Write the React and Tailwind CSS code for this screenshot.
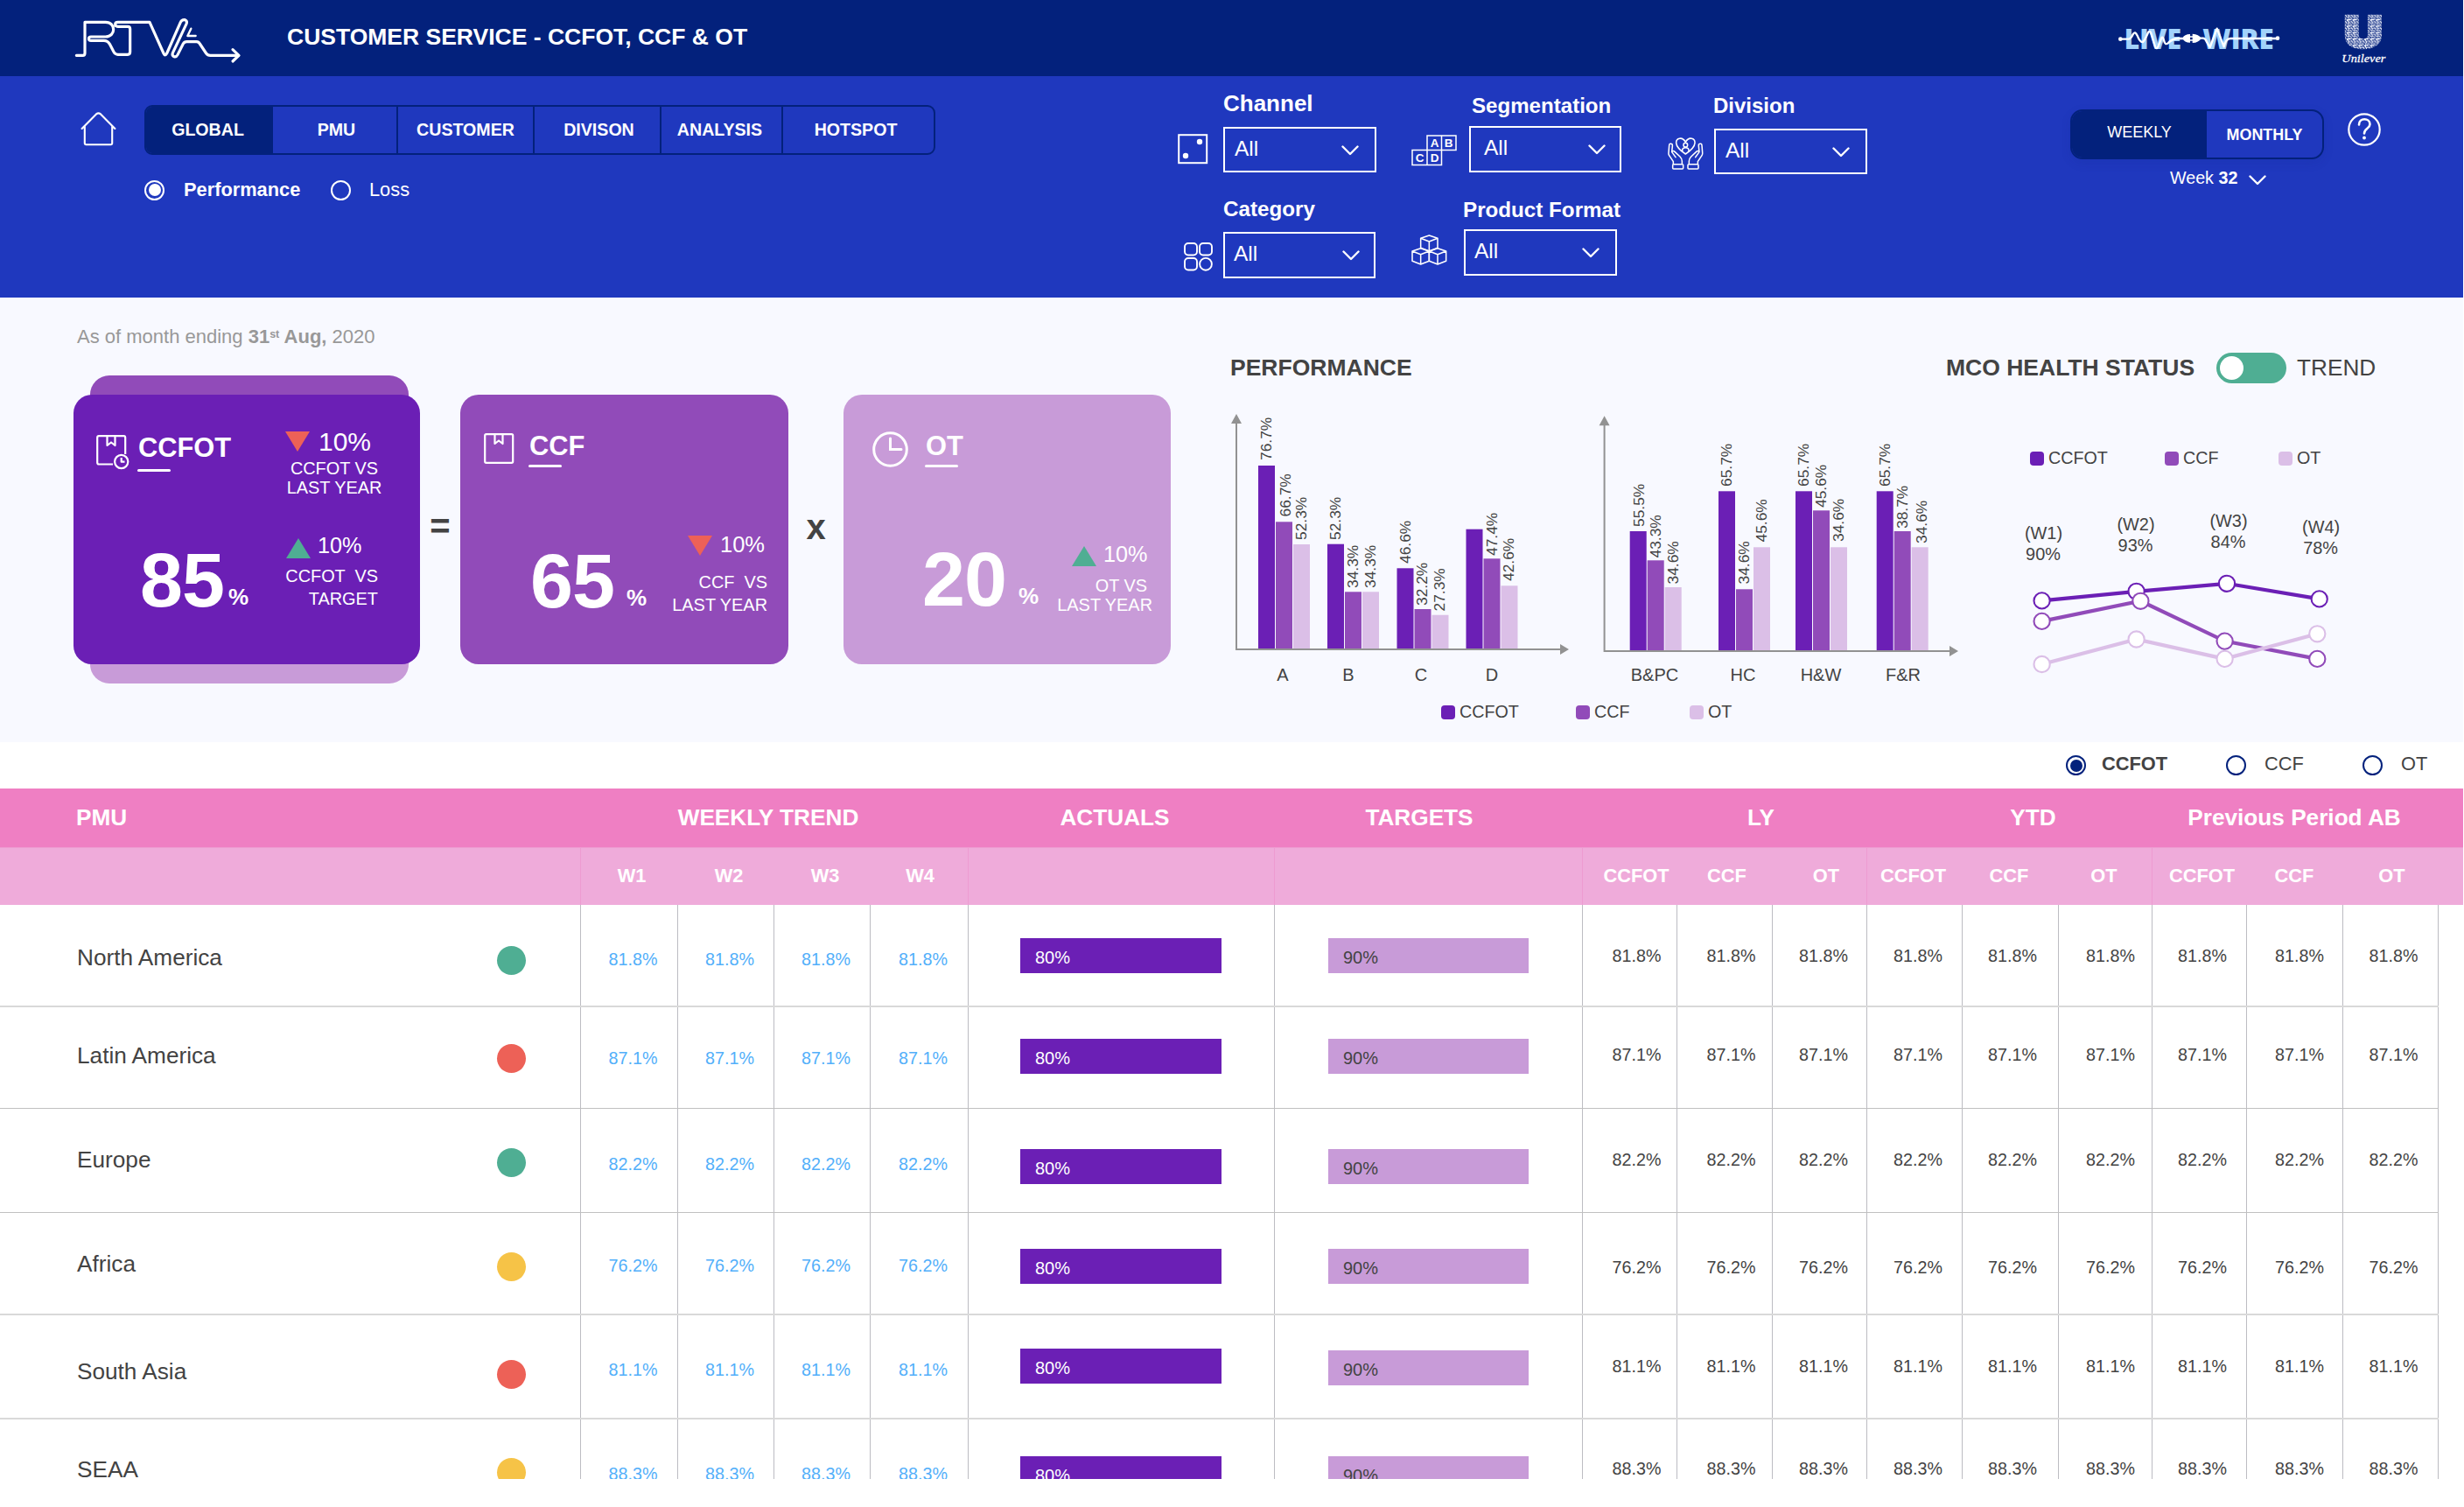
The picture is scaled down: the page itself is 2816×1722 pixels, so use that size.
import React, { useState } from 'react';
import clsx from 'clsx';

const SERIES = [
    { name: 'CCFOT', color: '#6b1fb5', bg: 'bg-[#6b1fb5]' },
    { name: 'CCF', color: '#914bb9', bg: 'bg-[#914bb9]' },
    { name: 'OT', color: '#dbbfe7', bg: 'bg-[#dbbfe7]' }
];

const TABS = [
    { name: 'GLOBAL', className: 'w-[145px]' },
    { name: 'PMU', className: 'w-[143px] pl-1' },
    { name: 'CUSTOMER', className: 'w-[156px]' },
    { name: 'DIVISON', className: 'w-[145px] pl-1' },
    { name: 'ANALYSIS', className: 'w-[139px] pr-1' },
    { name: 'HOTSPOT', className: 'w-[176px] pr-2' }
];

// Each bar: [top of bar, label, label baseline x, label start y]
const GROUP_CHART = {
    axis: { x: 1413, top: 473, bottom: 742, right: 1793 },
    groups: [
        { name: 'A', x: 1438, labelX: 1466, bars: [[532, '76.7%', 1453, 526], [596.3, '66.7%', 1474.5, 590.5], [622, '52.3%', 1492.5, 617]] },
        { name: 'B', x: 1517, labelX: 1541, bars: [[621.7, '52.3%', 1532, 617], [676.3, '34.3%', 1552, 672], [676.3, '34.3%', 1572, 672]] },
        { name: 'C', x: 1596.5, labelX: 1624, bars: [[649.3, '46.6%', 1611.5, 644], [696, '32.2%', 1631, 692], [702.7, '27.3%', 1651, 698.5]] },
        { name: 'D', x: 1675.5, labelX: 1705, bars: [[604.7, '', 0, 0], [638.3, '47.4%', 1710.5, 635], [669.3, '42.6%', 1730, 664]] }
    ]
};

const DIVISION_CHART = {
    axis: { x: 1833.6, top: 475.3, bottom: 744, right: 2238 },
    groups: [
        { name: 'B&PC', x: 1862.7, labelX: 1891, bars: [[607, '55.5%', 1878.5, 602], [640.3, '43.3%', 1898, 637.5], [671, '34.6%', 1917.5, 667.5]] },
        { name: 'HC', x: 1964, labelX: 1992, bars: [[561.3, '65.7%', 1979, 556], [673.3, '34.6%', 1999, 667.5], [625.3, '45.6%', 2019, 619.5]] },
        { name: 'H&W', x: 2052, labelX: 2081, bars: [[561.3, '65.7%', 2067, 556], [583.3, '45.6%', 2087, 580], [625.3, '34.6%', 2107, 619]] },
        { name: 'F&R', x: 2144.7, labelX: 2175, bars: [[561.3, '65.7%', 2159.5, 556], [607, '38.7%', 2179.5, 604], [625.3, '34.6%', 2201.5, 621]] }
    ]
};

const TREND_POINTS = [
    [[2333.6, 685.4], [2441.6, 674.8], [2545, 665.8], [2650.7, 683.4]],
    [[2333.6, 708.9], [2446.4, 685.8], [2542.6, 731.6], [2648.3, 751.9]],
    [[2333.6, 758], [2441.6, 729.5], [2542.6, 751.9], [2648.3, 723.3]]
];

const TREND_LABELS = [
    { week: '(W1)', value: '90%', x: 2335.5, y: 614.5 },
    { week: '(W2)', value: '93%', x: 2441, y: 605.2 },
    { week: '(W3)', value: '84%', x: 2547, y: 600.5 },
    { week: '(W4)', value: '78%', x: 2652.6, y: 607.5 }
];

const GRID = 'grid grid-cols-[663px_111px_110px_110px_112px_350px_352px_108px_109px_108px_109px_110px_107px_108px_110px_110px]';

const WEEK_HEADS = [['W1', 'pl-[6px]'], ['W2', 'pl-[8px]'], ['W3', 'pl-[8px]'], ['W4', 'pl-[3px]']];
const METRIC_HEADS = [
    ['CCFOT', 'pl-[15px] border-l'], ['CCF', 'pl-[6px]'], ['OT', 'pl-[16px]'],
    ['CCFOT', 'pr-[3px] border-l'], ['CCF', 'pr-[2px]'], ['OT', 'pr-[2px]'],
    ['CCFOT', 'pl-[6px] border-l'], ['CCF', 'pl-0'], ['OT', 'pl-[3px]']
];
const METRIC_PADS = ['pl-[16px]', 'pl-[15px]', 'pl-[9px]', 'pl-[8px]', 'pl-[5px]', 'pl-[12px]', 'pl-[7px]', 'pl-[11px]', 'pl-[7px]'];

const ROWS = [
    { name: 'North America', dot: 'bg-[#4fae93]', value: '81.8%', row: 'h-[117px] border-b-2 border-[#d9d9d9]', nameY: 'pt-[48px]', dotY: 'mt-[47px]', weekY: 'pt-[50px]', actualY: 'mt-[38px]', targetY: 'mt-[38px]', metricY: 'pt-[46px]' },
    { name: 'Latin America', dot: 'bg-[#ed6157]', value: '87.1%', row: 'h-[116px] border-b border-[#c0c0c0]', nameY: 'pt-[43px]', dotY: 'mt-[42px]', weekY: 'pt-[46px]', actualY: 'mt-[36px]', targetY: 'mt-[36px]', metricY: 'pt-[42px]' },
    { name: 'Europe', dot: 'bg-[#4fae93]', value: '82.2%', row: 'h-[119px] border-b border-[#c0c0c0]', nameY: 'pt-[46px]', dotY: 'mt-[45px]', weekY: 'pt-[51px]', actualY: 'mt-[46px]', targetY: 'mt-[46px]', metricY: 'pt-[46px]' },
    { name: 'Africa', dot: 'bg-[#f6c347]', value: '76.2%', row: 'h-[117px] border-b-2 border-[#d9d9d9]', nameY: 'pt-[46px]', dotY: 'mt-[45px]', weekY: 'pt-[48px]', actualY: 'mt-[41px]', targetY: 'mt-[41px]', metricY: 'pt-[50px]' },
    { name: 'South Asia', dot: 'bg-[#ed6157]', value: '81.1%', row: 'h-[119px] border-b-2 border-[#d9d9d9]', nameY: 'pt-[52px]', dotY: 'mt-[51px]', weekY: 'pt-[50px]', actualY: 'mt-[38px]', targetY: 'mt-[40px]', metricY: 'pt-[46px]' },
    { name: 'SEAA', dot: 'bg-[#f6c347]', value: '88.3%', row: 'h-[68px]', nameY: 'pt-[45px]', dotY: 'mt-[44px]', weekY: 'pt-[50px]', actualY: 'mt-[42px]', targetY: 'mt-[42px]', metricY: 'pt-[44px]' }
];

const RtvaLogo = () => (
    <svg className="ml-20 h-[87px] w-[200px]" viewBox="0 0 600 261" fill="none" stroke="#fff" strokeWidth="9.5" strokeLinecap="round" strokeLinejoin="round">
        <path d="M22 190H44Q51 190 51 182V76H122C158 76 158 126 122 126H72C62 126 62 139 72 139H116Q129 139 136 151L150 178Q155 187 164 187H198Q206 187 206 178V99Q206 91 198 91H164C152 91 152 76 164 76H273L321 183Q326 194 332 183L379 76Q384 66 394 68Q403 72 399 82L352 182Q349 191 357 194Q365 196 369 188L388 150Q392 143 400 143H434Q441 143 445 150L467 183Q472 190 481 190H578" />
        <path d="M558 170L579 190L558 210" />
        <path d="M415 98L403 123H431" strokeWidth="7" />
    </svg>
);

const LiveWireLogo = () => (
    <svg className="mt-[30px] h-[29px] w-[189px] overflow-visible" viewBox="270 90 567 87" fill="none">
        <g fill="#a2d2fb" fontFamily="Open Sans" fontWeight="800" fontSize="95">
            <text x="296" y="167" textLength="196" lengthAdjust="spacingAndGlyphs">LIVE</text>
            <text x="565" y="167" textLength="244" lengthAdjust="spacingAndGlyphs">WIRE</text>
        </g>
        <g stroke="#fff" strokeWidth="7" strokeLinecap="round" strokeLinejoin="round">
            <path d="M283 134H312Q320 132 326 118Q333 105 341 122Q350 146 360 144Q366 140 378 112Q384 100 390 120L402 160Q407 172 413 158L424 130Q429 124 432 138Q436 156 446 148Q460 133 480 132H500" />
            <path d="M556 131H566Q574 131 578 142L590 162L614 98L638 160Q644 132 660 132H820" />
            <path d="M518 126H534M518 138H534" strokeWidth="4" />
        </g>
        <g fill="#fff">
            <circle cx="283" cy="134" r="7" />
            <circle cx="822" cy="131" r="7" />
            <path d="M496 131Q502 117 522 117V146Q502 146 496 131ZM530 116Q552 117 560 131Q552 146 530 147Z" />
        </g>
    </svg>
);

const UnileverLogo = () => (
    <svg className="mt-3 ml-[67px] h-[64px] w-[54px] overflow-visible" viewBox="1033 36 162 192">
        <defs>
            <pattern id="mosaic" width="20" height="22" patternUnits="userSpaceOnUse">
                <rect width="20" height="22" fill="#eef1fb" />
                <path d="M0 4Q5 9 9 3M12 0Q10 7 17 8M3 13Q8 9 11 15T18 16M0 20Q5 15 9 21M14 11L20 12M13 20L18 22" stroke="#03217c" strokeWidth="3.2" fill="none" />
            </pattern>
        </defs>
        <text x="1049" y="159" fontFamily="Liberation Sans" fontWeight="700" fontSize="146" textLength="124" lengthAdjust="spacingAndGlyphs" fill="url(#mosaic)" stroke="url(#mosaic)" strokeWidth="20">U</text>
        <text x="1037" y="214" fontFamily="Liberation Serif" fontStyle="italic" fontSize="40" textLength="150" lengthAdjust="spacingAndGlyphs" fill="#fff" stroke="#fff" strokeWidth="0.8">Unilever</text>
    </svg>
);

const Chevron = ({ className }) => (
    <svg className={clsx('h-[12px] w-[20px]', className)} viewBox="0 0 20 12" fill="none" stroke="#fff" strokeWidth="2.4" strokeLinecap="round" strokeLinejoin="round">
        <path d="M1.5 1.5L10 10L18.5 1.5" />
    </svg>
);

const DiceIcon = () => (
    <svg className="mt-[50px] h-[35px] w-[35px]" viewBox="0 0 35 35" fill="none">
        <rect x="1.2" y="1.2" width="32" height="32" stroke="#fff" strokeWidth="2" />
        <circle cx="25" cy="9" r="3.2" fill="#fff" />
        <circle cx="9" cy="25" r="3.2" fill="#fff" />
    </svg>
);

const BlocksIcon = () => (
    <svg className="mt-[48px] h-[36px] w-[53px]" viewBox="0 0 53 36" fill="none" stroke="#fff" strokeWidth="1.5">
        <path d="M18 1H51V17.5H18ZM34.5 1V17.5M1 17.5H34.5V34.5H1ZM18 17.5V34.5" />
        <g fill="#fff" stroke="none" fontFamily="Liberation Sans" fontWeight="700" fontSize="13.5" textAnchor="middle">
            <text x="26.5" y="14">A</text>
            <text x="42.5" y="14">B</text>
            <text x="9.5" y="31">C</text>
            <text x="26.5" y="31">D</text>
        </g>
    </svg>
);

const HandsIcon = () => (
    <svg className="mt-[51px] h-[38px] w-[41px]" viewBox="0 0 123 114" fill="none" stroke="#fff" strokeWidth="4.6" strokeLinecap="round" strokeLinejoin="round">
        <path d="M61 16C50 -4 28 2 29 19C30 34 46 47 61 57C76 47 92 34 93 19C94 2 72 -4 61 16Z" />
        <circle cx="61" cy="26" r="7" />
        <path d="M50 48V44Q50 35 61 35Q72 35 72 44V48" />
        <path d="M19 91V83L5 62Q2 58 3 52L5 27Q6 20 12 22Q17 23 16 30L14 50L27 68M14 50Q18 44 24 49L42 66Q49 73 49 82V91" />
        <path d="M103 91V83L117 62Q120 58 119 52L117 27Q116 20 110 22Q105 23 106 30L108 50L95 68M108 50Q104 44 98 49L80 66Q73 73 73 82V91" />
        <rect x="17" y="92" width="36" height="16" rx="3" />
        <rect x="69" y="92" width="36" height="16" rx="3" />
    </svg>
);

const CategoryIcon = () => (
    <svg className="mt-[53px] ml-[7px] h-[33px] w-[34px]" viewBox="0 0 34 33" fill="none" stroke="#fff" strokeWidth="1.9">
        <rect x="1" y="1" width="14" height="13.5" rx="4" />
        <rect x="18" y="1" width="14" height="13.5" rx="4" />
        <rect x="1" y="18" width="14" height="13.5" rx="4" />
        <circle cx="25" cy="24.8" r="6.9" />
    </svg>
);

const CubesIcon = () => (
    <svg className="mt-[43px] h-[36px] w-[41px]" viewBox="0 0 123 108" fill="none" stroke="#fff" strokeWidth="4.6" strokeLinejoin="round">
        <path d="M61 3L90 13V46L61 57L32 46V13ZM32 13L61 24L90 13M61 24V57" />
        <path d="M32 47L61 57V91L32 102L3 91V57ZM3 57L32 68L61 57M32 68V102" />
        <path d="M90 47L119 57V91L90 102L61 91V57ZM61 57L90 68L119 57M90 68V102" />
    </svg>
);

const Radio = ({ checked, dark, className }) => (
    <span className={clsx('flex size-[23px] items-center justify-center rounded-full border-2', dark ? 'border-[#03217c]' : 'border-white', className)}>
        {checked && <span className={clsx('size-[14px] rounded-full', dark ? 'bg-[#03217c]' : 'bg-white')}></span>}
    </span>
);

const Filter = ({ label, icon, slot, className, labelClass, boxClass }) => (
    <div className={clsx('flex', className)}>
        <div className={clsx('shrink-0', slot)}>{icon}</div>
        <div>
            <div className={clsx('h-[30px] font-bold leading-[30px] whitespace-nowrap', labelClass)}>{label}</div>
            <button className={clsx('flex items-center justify-between border-2 border-white pb-[2px] text-[24.5px]', boxClass)}>
                All
                <Chevron className="mt-[3px]" />
            </button>
        </div>
    </div>
);

const Triangle = ({ up, className }) => (
    <svg className={clsx('h-[23px] w-[28px]', className)} viewBox="0 0 28 23">
        {up ? <path d="M14 0L28 23H0Z" fill="#4fae93" /> : <path d="M0 0H28L14 23Z" fill="#ed6157" />}
    </svg>
);

const PackageIcon = ({ clock, className }) => (
    <svg className={clsx('h-[40px]', className, clock ? 'w-[38px]' : 'w-[35px]')} viewBox={clock ? '0 0 38 40' : '0 0 35 40'} fill="none" stroke="#fff" strokeWidth="2.2" strokeLinejoin="round">
        {clock
            ? <path d="M19 33.5H3Q1.2 33.5 1.2 31.5V3Q1.2 1.2 3 1.2H31.5Q33.2 1.2 33.2 3V22" />
            : <rect x="1.2" y="1.2" width="32" height="32.6" rx="1.5" />}
        <path d="M12.5 1.2V12L17 8.5L21.5 12V1.2" />
        {clock && <circle cx="28.7" cy="30.5" r="7.6" />}
        {clock && <path d="M28.7 26V30.7H32.5" />}
    </svg>
);

const CardTitle = ({ title, lineClass }) => (
    <div>
        <div className="h-[32px] pl-px text-[30.8px] font-bold leading-[33px]">{title}</div>
        <div className={clsx('h-[3px] rounded-full bg-white', lineClass)}></div>
    </div>
);

const BigNumber = ({ value, className, percentClass }) => (
    <div className={clsx('flex items-end font-bold', className)}>
        <span className="text-[88px] leading-[90px] tracking-[-1px]">{value}</span>
        <span className={clsx('pb-[12px] text-[26px] leading-[28px]', percentClass)}>%</span>
    </div>
);

const Legend = ({ className, widths }) => (
    <div className={clsx('flex h-6 items-center text-[19.7px]', className)}>
        {SERIES.map((s, i) => (
            <div key={s.name} className={clsx('flex items-center gap-[5px]', widths[i])}>
                <span className={clsx('size-[16px] rounded-[4px]', s.bg)}></span>
                {s.name}
            </div>
        ))}
    </div>
);

const BarGroups = ({ axis, groups }) => (
    <g>
        {groups.map((group) => (
            <g key={group.name}>
                {group.bars.map(([top, label, lx, ly], i) => (
                    <g key={i}>
                        <rect x={group.x + i * 20} y={top} width="19" height={axis.bottom - top} fill={SERIES[i].color} />
                        {label && <text transform={`translate(${lx} ${ly}) rotate(-90)`} fontSize="17.4">{label}</text>}
                    </g>
                ))}
                <text x={group.labelX} y="777.5" fontSize="20" textAnchor="middle">{group.name}</text>
            </g>
        ))}
        <path d={`M${axis.x} ${axis.top + 5}V${axis.bottom}H${axis.right - 5}`} fill="none" stroke="#929292" strokeWidth="2" />
        <path d={`M${axis.x} ${axis.top}l6 11h-12zM${axis.right} ${axis.bottom}l-10 -6v12z`} fill="#929292" />
    </g>
);

const TrendChart = () => (
    <svg className="mt-[45px] ml-[76px] h-[200px] w-[400px]" viewBox="2300 580 400 200">
        {TREND_POINTS.map((points, i) => (
            <g key={i} fill="none" stroke={SERIES[i].color}>
                <polyline points={points.map((p) => p.join(',')).join(' ')} strokeWidth="4.2" />
                {points.map(([x, y]) => (
                    <circle key={x} cx={x} cy={y} r="9.1" fill="#fff" strokeWidth="2.1" />
                ))}
            </g>
        ))}
        <g fill="#434343" fontSize="19.9" textAnchor="middle">
            {TREND_LABELS.map((l) => (
                <g key={l.week}>
                    <text x={l.x} y={l.y}>{l.week}</text>
                    <text x={l.x - 0.5} y={l.y + 24}>{l.value}</text>
                </g>
            ))}
        </g>
    </svg>
);

const Header = () => (
    <header className="flex h-[87px] bg-[#03217c]">
        <RtvaLogo />
        <h1 className="ml-[48px] text-[26.5px] font-bold leading-[84px]">CUSTOMER SERVICE - CCFOT, CCF &amp; OT</h1>
        <div className="ml-auto flex pr-[86px]">
            <LiveWireLogo />
            <UnileverLogo />
        </div>
    </header>
);

const Toolbar = () => {
    const [tab, setTab] = useState('GLOBAL');
    return (
        <section className="flex h-[253px] bg-[#1f38be]">
            <div className="w-[1069px] shrink-0 pt-[33px] pl-[92px]">
                <div className="flex">
                    <svg className="mt-[8px] h-[40px] w-[41px] shrink-0" viewBox="0 0 41 40" fill="none" stroke="#fff" strokeWidth="2.1" strokeLinecap="round" strokeLinejoin="round">
                        <path d="M1.6 19L18.2 2.2Q20.5 .4 22.8 2.2L39.4 19M4.8 16V35.5Q4.8 37.2 6.5 37.2H34.5Q36.2 37.2 36.2 35.5V16" />
                    </svg>
                    <nav className="ml-[32px] flex h-[57px] w-[904px] overflow-hidden rounded-[9px] border-2 border-[#03217c]">
                        {TABS.map((t, i) => (
                            <button
                                key={t.name}
                                onClick={() => setTab(t.name)}
                                className={clsx(
                                    'shrink-0 text-[19.6px] font-bold',
                                    i === 0 ? '-ml-[2px]' : 'border-l-2 border-[#03217c]',
                                    tab === t.name && 'bg-[#03217c]',
                                    t.className
                                )}
                            >
                                {t.name}
                            </button>
                        ))}
                    </nav>
                </div>
                <div className="mt-[28px] flex h-6 items-center pl-[73px] text-[21.8px]">
                    <Radio checked />
                    <span className="ml-[22px] w-[168px] font-bold">Performance</span>
                    <Radio />
                    <span className="ml-[21px]">Loss</span>
                </div>
            </div>

            {/* Filters */}
            <div className="ml-[277px] w-[788px] shrink-0 pt-[16px]">
                <div className="flex h-[121px]">
                    <Filter label="Channel" icon={<DiceIcon />} slot="w-[52px]" labelClass="text-[26px]" boxClass="mt-[12px] h-[52px] w-[175px] pl-[11px] pr-[18px]" />
                    <Filter label="Segmentation" icon={<BlocksIcon />} slot="w-[66px]" className="ml-[40px] pt-[3px]" labelClass="pl-[3px] text-[24.1px]" boxClass="mt-[8px] h-[53px] w-[174px] pl-[15px] pr-[16px]" />
                    <Filter label="Division" icon={<HandsIcon />} slot="w-[53px]" className="ml-[53px] pt-[3px]" labelClass="pl-0 -ml-px text-[24px]" boxClass="mt-[11px] h-[52px] w-[175px] pl-[11px] pr-[18px]" />
                </div>
                <div className="flex">
                    <Filter label="Category" icon={<CategoryIcon />} slot="w-[52px]" labelClass="text-[24.2px]" boxClass="mt-[11px] h-[53px] w-[174px] pl-[10px] pr-[16px]" />
                    <Filter label="Product Format" icon={<CubesIcon />} slot="w-[60px]" className="ml-[41px] pt-[1px]" labelClass="-ml-px text-[24.2px]" boxClass="mt-[7px] h-[53px] w-[175px] pl-[10px] pr-[18px]" />
                </div>
            </div>

            <div className="ml-[232px] pt-[38px]">
                <div className="flex h-[57px] w-[290px] overflow-hidden rounded-[14px] border-2 border-[#03217c] shadow-[0_4px_12px_rgba(3,33,124,0.12)]">
                    <button className="w-[154px] shrink-0 bg-[#03217c] pb-[4px] text-[18px]">WEEKLY</button>
                    <button className="w-[132px] shrink-0 pt-[1px] text-[17.9px] font-bold">MONTHLY</button>
                </div>
                <div className="mt-[10px] flex h-6 items-center pl-[114px] text-[19.7px]">
                    <span className="whitespace-pre">Week <b>32</b></span>
                    <Chevron className="mt-[3px] ml-[13px] h-[10px] w-[17px]" />
                </div>
            </div>
            <svg className="mt-[42px] ml-[27px] size-[38px]" viewBox="0 0 38 38" fill="none" stroke="#fff" strokeWidth="2.2" strokeLinecap="round">
                <circle cx="19" cy="19" r="17.7" />
                <path d="M13 13.5C13 5 25.5 5.5 25.5 13C25.5 18 19 17.5 19 23.5" strokeWidth="2.6" />
                <circle cx="19" cy="28.5" r="1.9" fill="#fff" stroke="none" />
            </svg>
        </section>
    );
};

const Cards = () => (
    <div className="mt-[54px] flex h-[308px] text-white">
        <div className="relative z-0 w-[396px] shrink-0">
            <div className="absolute -top-[22px] left-[19px] -z-20 h-[176px] w-[364px] rounded-t-[22px] bg-[#914bb9]"></div>
            <div className="absolute -bottom-[22px] left-[19px] -z-20 h-[176px] w-[364px] rounded-b-[22px] bg-[#c89bd8]"></div>
            <div className="flex h-[308px] rounded-[21px] bg-[#6b1fb5]">
                <div className="w-[236px] shrink-0 pt-[44px]">
                    <div className="flex pl-[26px]">
                        <PackageIcon clock className="mt-[2px]" />
                        <div className="ml-[9px]">
                            <CardTitle title="CCFOT" lineClass="mt-[9px] w-[38px]" />
                        </div>
                    </div>
                    <BigNumber value="85" className="mt-[79px] pl-[76px]" percentClass="ml-[5px]" />
                </div>
                <div className="pt-[38px] text-[19.9px]">
                    <div className="flex h-[30px] items-center pl-[6px] text-[30px]">
                        <Triangle className="w-[27px]" />
                        <span className="ml-[10px]">10%</span>
                    </div>
                    <div className="mt-[5px] ml-[7px] w-[110px] text-center leading-[22px]">CCFOT VS<br />LAST YEAR</div>
                    <div className="mt-[41px] flex h-[30px] items-center pl-[7px] text-[25.2px]">
                        <Triangle up className="mt-[4px]" />
                        <span className="ml-[8px]">10%</span>
                    </div>
                    <div className="mt-[6px] w-[112px] text-right leading-[26px] whitespace-pre">{'CCFOT  VS\nTARGET'}</div>
                </div>
            </div>
        </div>

        <div className="flex w-[46px] shrink-0 items-center justify-center pb-[9px] text-[40px] font-bold text-[#434343]">=</div>

        <div className="flex w-[375px] shrink-0 rounded-[21px] bg-[#914bb9]">
            <div className="w-[235px] shrink-0 pt-[42px]">
                <div className="flex pl-[27px]">
                    <PackageIcon className="mt-[2px]" />
                    <div className="ml-[16px]">
                        <CardTitle title="CCF" lineClass="mt-[6px] w-[38px]" />
                    </div>
                </div>
                <BigNumber value="65" className="mt-[84px] pl-[80px]" percentClass="ml-[14px]" />
            </div>
            <div className="w-[116px] pt-[156px] text-right text-[19.9px]">
                <div className="flex h-[30px] items-center pl-[25px] text-[25.5px]">
                    <Triangle className="mt-[3px] w-[27px]" />
                    <span className="ml-[9px]">10%</span>
                </div>
                <div className="mt-[15px] leading-[26px] whitespace-pre">{'CCF  VS\nLAST YEAR'}</div>
            </div>
        </div>

        <div className="flex w-[63px] shrink-0 items-center justify-center pb-[7px] text-[40px] font-bold text-[#434343]">x</div>

        <div className="flex w-[374px] shrink-0 rounded-[21px] bg-[#c89bd8]">
            <div className="w-[235px] shrink-0 pt-[42px]">
                <div className="flex pl-[33px]">
                    <svg className="size-[41px]" viewBox="0 0 41 41" fill="none" stroke="#fff" strokeWidth="3" strokeLinecap="round">
                        <circle cx="20.5" cy="20.5" r="18.8" />
                        <path d="M20.5 8V20.5H33" />
                    </svg>
                    <div className="ml-[19px]">
                        <CardTitle title="OT" lineClass="mt-[6px] w-[38px]" />
                    </div>
                </div>
                <BigNumber value="20" className="mt-[83px] pl-[90px]" percentClass="ml-[14px]" />
            </div>
            <div className="w-[118px] pt-[168px] text-right text-[19.9px]">
                <div className="flex h-[30px] items-center pl-[26px] text-[25.2px]">
                    <Triangle up className="mt-[3px]" />
                    <span className="ml-[8px]">10%</span>
                </div>
                <div className="mt-[9px] pr-[6px] leading-[22px]">OT VS</div>
                <div className="leading-[22px]">LAST YEAR</div>
            </div>
        </div>
    </div>
);

const Summary = () => (
    <section className="flex h-[508px] bg-[#f8f9ff] text-[#434343]">
        <div className="w-[1338px] shrink-0 pt-[33px] pl-[84px]">
            <p className="h-6 pl-[4px] text-[22px] leading-6 text-[#989898]">
                As of month ending <b>31<span className="relative -top-[6px] text-[12.5px]">st</span> Aug,</b> 2020
            </p>
            <Cards />
        </div>

        {/* Performance charts */}
        <div className="ml-[62px] w-[820px] shrink-0 pt-[65px]">
            <h2 className="pl-[6px] text-[26.5px] font-bold leading-[30px]">PERFORMANCE</h2>
            <svg className="mt-[25px] h-[330px] w-[845px] max-w-none" viewBox="1400 460 845 330" fill="#434343">
                <BarGroups {...GROUP_CHART} />
                <BarGroups {...DIVISION_CHART} />
            </svg>
            <Legend className="mt-[12px] pl-[247px]" widths={['w-[154px]', 'w-[130px]', '']} />
        </div>

        {/* MCO health */}
        <div className="ml-[4px] pt-[63px]">
            <div className="flex h-[35px] items-center text-[26.2px]">
                <h2 className="w-[309px] shrink-0 text-[26.5px] font-bold whitespace-nowrap">MCO HEALTH STATUS</h2>
                <span className="flex h-[35px] w-[80px] items-center rounded-full bg-[#4fae93] pl-[4px]">
                    <span className="size-[27px] rounded-full bg-white"></span>
                </span>
                <span className="ml-[12px]">TREND</span>
            </div>
            <Legend className="mt-[74px] pl-[96px]" widths={['w-[154px]', 'w-[130px]', '']} />
            <TrendChart />
        </div>
    </section>
);

const PmuTable = () => (
    <section className="h-[789px] overflow-hidden">
        <div className="flex h-[67px] items-center bg-[#ef7fc3] text-center text-[26.2px] font-bold text-white">
            <div className="w-[664px] pl-[87px] text-left">PMU</div>
            <div className="w-[442px] pr-[14px]">WEEKLY TREND</div>
            <div className="w-[350px] pr-[14px]">ACTUALS</div>
            <div className="w-[352px] pr-[20px]">TARGETS</div>
            <div className="w-[325px] pl-[84px]">LY</div>
            <div className="w-[326px] pl-[55px]">YTD</div>
            <div className="w-[356px] pr-[30px]">Previous Period AB</div>
        </div>
        <div className="h-[66px] border-t border-[#ee9bd1] bg-[#efabda]">
            <div className={clsx(GRID, 'h-full text-center text-[21.8px] font-bold leading-[63px] text-white')}>
                <div></div>
                {WEEK_HEADS.map(([name, cls], i) => (
                    <div key={name} className={clsx('border-[#ee9bd1]', i === 0 && 'border-l', cls)}>{name}</div>
                ))}
                <div className="border-l border-[#ee9bd1]"></div>
                <div className="border-l border-[#ee9bd1]"></div>
                {METRIC_HEADS.map(([name, cls], i) => (
                    <div key={i} className={clsx('border-[#ee9bd1]', cls)}>{name}</div>
                ))}
            </div>
        </div>
        {ROWS.map((r) => (
            <div key={r.name} className={clsx(GRID, 'w-[2787px] overflow-hidden text-center text-[19.7px] leading-6 text-[#434343]', r.row)}>
                <div className="flex">
                    <span className={clsx('w-[568px] pl-[88px] text-left text-[26.2px]', r.nameY)}>{r.name}</span>
                    <span className={clsx('size-[33px] rounded-full', r.dot, r.dotY)}></span>
                </div>
                {WEEK_HEADS.map(([week]) => (
                    <div key={week} className={clsx('border-l border-[#bcbcc2] pl-[9px] text-[#52affa]', r.weekY)}>{r.value}</div>
                ))}
                <div className="border-l border-[#bcbcc2]">
                    <div className={clsx('ml-[59px] h-[40px] w-[230px] bg-[#6b1fb5] pt-[2px] pl-[17px] text-left text-[20px] leading-10 text-white', r.actualY)}>80%</div>
                </div>
                <div className="border-l border-[#bcbcc2]">
                    <div className={clsx('ml-[61px] h-[40px] w-[229px] bg-[#c89bd8] pt-[2px] pl-[17px] text-left text-[20px] leading-10', r.targetY)}>90%</div>
                </div>
                {METRIC_PADS.map((pad, i) => (
                    <div key={i} className={clsx('border-l border-[#bcbcc2]', i === 8 && 'border-r', pad, r.metricY)}>{r.value}</div>
                ))}
            </div>
        ))}
    </section>
);

const App = () => (
    <div className="h-[1722px] w-[2816px] overflow-hidden bg-white font-['Liberation_Sans',Arial,sans-serif]">
        <div className="w-[2815px] text-white">
            <Header />
            <Toolbar />
            <Summary />
            <div className="flex h-[53px] items-center pl-[2361px] text-[21.8px] text-[#434343]">
                <Radio checked dark />
                <span className="ml-[18px] w-[142px] pb-[2px] font-bold">CCFOT</span>
                <Radio dark />
                <span className="ml-[21px] w-[112px] pb-[2px]">CCF</span>
                <Radio dark />
                <span className="ml-[21px] pb-[2px]">OT</span>
            </div>
            <PmuTable />
        </div>
    </div>
);

export default App;
